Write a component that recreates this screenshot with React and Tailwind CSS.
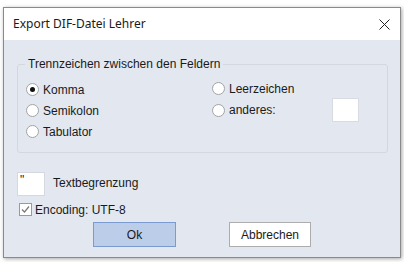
import React from 'react'

function Radio({ checked }) {
  return (
    <span className="w-[13px] h-[13px] rounded-full border border-[#a3a3a3] bg-white flex items-center justify-center shrink-0">
      {checked && <span className="w-[5px] h-[5px] rounded-full bg-[#111]" />}
    </span>
  )
}

function RadioRow({ label, checked }) {
  return (
    <label className="h-[21px] flex items-center gap-[4px]">
      <Radio checked={checked} />
      <span>{label}</span>
    </label>
  )
}

export default function App() {
  return (
    <div
      className="w-[404px] h-[262px] bg-white pt-[7px] pl-[3px] text-[12px] text-[#1a1a1a]"
      style={{ fontFamily: '"Liberation Sans", Arial, sans-serif' }}
    >
      <div className="w-[398px] h-[251px] border border-[#8a8a8a] flex flex-col shadow-[1px_1px_4px_rgba(0,0,0,0.35)]">
        <div className="h-[32px] bg-white flex items-center justify-between pl-[9px] pr-[10px]">
          <span style={{ fontFamily: '"Noto Sans", "Open Sans", sans-serif' }}>
            Export DIF-Datei Lehrer
          </span>
          <svg width="11" height="11" viewBox="0 0 11 11">
            <path d="M0.5 0.5 L10.5 10.5 M10.5 0.5 L0.5 10.5" stroke="#222" strokeWidth="1" />
          </svg>
        </div>

        <div className="flex-1 bg-[#e3e8f0] pt-[16px] pl-[13px]">
          <fieldset className="w-[371px] h-[97px] border border-[#d3d8df] rounded-[3px]">
            <legend className="ml-[7px] px-[3px] leading-[16px]">Trennzeichen zwischen den Feldern</legend>
            <div className="flex pl-[8px]">
              <div className="w-[186px] flex flex-col pt-[7px]">
                <RadioRow label="Komma" checked />
                <RadioRow label="Semikolon" />
                <RadioRow label="Tabulator" />
              </div>
              <div className="flex flex-col pt-[6px]">
                <RadioRow label="Leerzeichen" />
                <div className="h-[22px] flex items-center">
                  <div className="w-[120px]">
                    <RadioRow label="anderes:" />
                  </div>
                  <div className="w-[27px] h-[24px] bg-white border border-[#d8dce2]" />
                </div>
              </div>
            </div>
          </fieldset>

          <div className="mt-[19px] flex items-center gap-[8px]">
            <div className="w-[28px] h-[24px] bg-white border border-[#d5d9df] pl-[2px] pt-[1px] leading-[12px]">"</div>
            <span className="-mt-[3px]">Textbegrenzung</span>
          </div>

          <label className="mt-[7px] ml-[2px] flex items-center gap-[3px] h-[13px]">
            <span className="w-[13px] h-[13px] bg-white border border-[#9a9a9a] flex items-center justify-center">
              <svg width="9" height="9" viewBox="0 0 9 9">
                <path d="M1 4.5 L3.5 7 L8 1.5" fill="none" stroke="#7a7a7a" strokeWidth="1.2" />
              </svg>
            </span>
            <span>Encoding: UTF-8</span>
          </label>

          <div className="mt-[6px] flex">
            <button className="ml-[76px] w-[83px] h-[25px] bg-[#bccde9] border border-[#7b9bd0]">Ok</button>
            <button className="ml-[53px] w-[82px] h-[25px] bg-white border border-[#adadad]">Abbrechen</button>
          </div>
        </div>
      </div>
    </div>
  )
}
